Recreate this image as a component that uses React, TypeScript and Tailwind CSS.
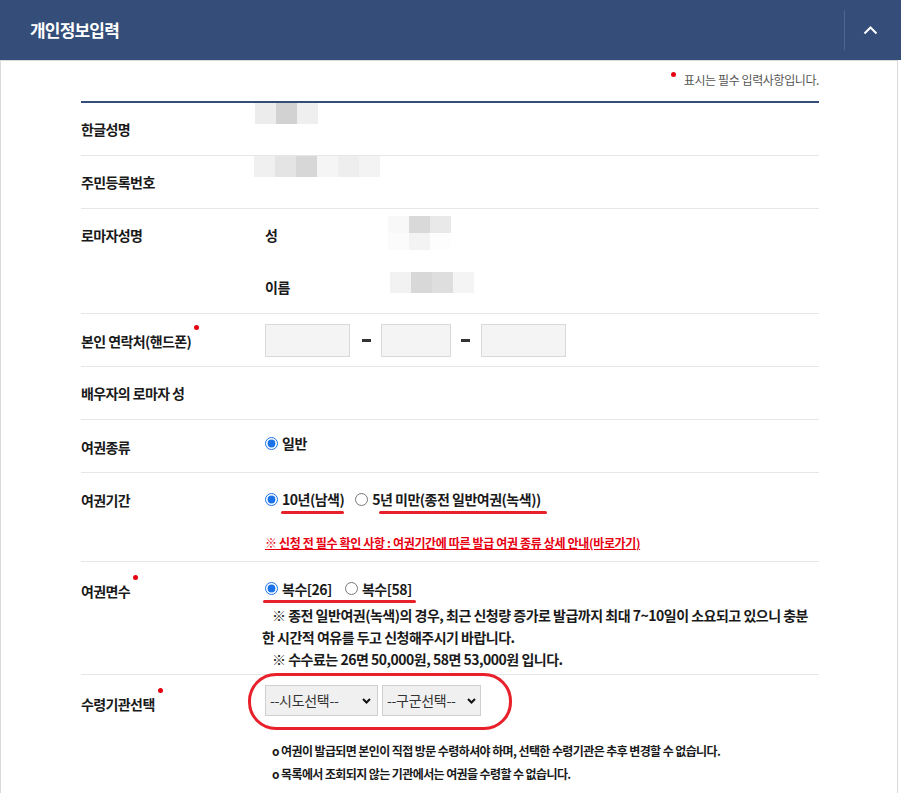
import React from "react";

const blocks = {
  name: ["#ececec", "#d2d2d2", "#efefef"],
  jumin: ["#f0f0f0", "#e4e4e4", "#d7d7d7", "#f5f5f5", "#eeeeee", "#f3f3f3"],
  lastTop: ["#f8f8f8", "#d9d9d9", "#e9e9e9"],
  lastBottom: ["#fbfbfb", "#f3f3f3", "#fdfdfd"],
  first: ["#f2f2f2", "#d8d8d8", "#dedede", "#f4f4f4"],
};

function Blur({ colors, h = "h-[21px]" }: { colors: string[]; h?: string }) {
  return (
    <div className="flex">
      {colors.map((c, i) => (
        <div key={i} className={`w-[21px] ${h}`} style={{ backgroundColor: c }} />
      ))}
    </div>
  );
}

function Label({ children, dot }: { children: React.ReactNode; dot?: boolean }) {
  return (
    <span className="relative text-[14px] leading-[20px] font-bold text-[#1a1a1a] tracking-[-0.6px]">
      {children}
      {dot && <span className="absolute -right-[8px] -top-[6px] w-[5px] h-[5px] rounded-full bg-[#e60012]" />}
    </span>
  );
}

function Radio({ name, checked, children }: { name: string; checked?: boolean; children: React.ReactNode }) {
  return (
    <label className="flex items-center gap-[4px]">
      <input type="radio" name={name} defaultChecked={checked} className="m-0 w-[13px] h-[13px] accent-[#1a73e8]" />
      <span className="text-[14px] leading-[18px] font-bold text-[#1a1a1a] tracking-[-0.5px]">{children}</span>
    </label>
  );
}

function Row({ label, dot, className = "", labelClass = "items-center", children }: {
  label: string;
  dot?: boolean;
  className?: string;
  labelClass?: string;
  children?: React.ReactNode;
}) {
  return (
    <div className={`flex border-b border-[#e6e6e6] ${className}`}>
      <div className={`w-[174px] flex shrink-0 ${labelClass}`}>
        <Label dot={dot}>{label}</Label>
      </div>
      <div className="flex-1">{children}</div>
    </div>
  );
}

export default function App() {
  return (
    <div className="w-[901px] bg-white font-['Noto_Sans_CJK_KR','Noto_Sans',sans-serif]">
      {/* header */}
      <div className="h-[60px] bg-[#344e79] flex items-center justify-between">
        <h2 className="pl-[30px] text-[17px] font-bold text-white tracking-[-0.8px]">개인정보입력</h2>
        <div className="flex items-center h-full">
          <div className="w-px h-[40px] bg-[#4d6790]" />
          <div className="w-[50px] mr-[6px] flex justify-center">
            <svg width="15" height="9" viewBox="0 0 15 9" fill="none">
              <path d="M1.5 7.5 L7.5 1.5 L13.5 7.5" stroke="white" strokeWidth="2" />
            </svg>
          </div>
        </div>
      </div>

      <div className="w-[898px] border-x border-t border-[#d9d9d9] pl-[80px]">
        <div className="w-[738px]">
          <div className="h-[40px] pt-[10px] flex justify-end">
            <span className="relative text-[12px] leading-[18px] text-[#555] tracking-[-0.4px]">
              <span className="absolute -left-[13px] top-[1px] w-[5px] h-[5px] rounded-full bg-[#e60012]" />
              표시는 필수 입력사항입니다.
            </span>
          </div>

          <div className="border-t-2 border-[#344e79]">
            <Row label="한글성명" className="h-[53px]">
              <div className="pb-[10px]">
                <Blur colors={blocks.name} />
              </div>
            </Row>
            <Row label="주민등록번호" className="h-[53px]">
              <div className="pb-[10px] -ml-px">
                <Blur colors={blocks.jumin} />
              </div>
            </Row>
            <Row label="로마자성명" className="h-[105px]" labelClass="items-start pt-[16px]">
              <div className="flex h-[52px] items-center">
                <span className="w-[133px] pl-[10px] text-[14px] font-bold text-[#1a1a1a]">성</span>
                <div className="flex flex-col -mt-[4px]">
                  <Blur colors={blocks.lastTop} h="h-[17px]" />
                  <Blur colors={blocks.lastBottom} h="h-[17px]" />
                </div>
              </div>
              <div className="flex h-[52px] items-center">
                <span className="w-[135px] pl-[10px] text-[14px] font-bold text-[#1a1a1a] tracking-[-0.5px]">이름</span>
                <div className="-mt-[10px]">
                  <Blur colors={blocks.first} />
                </div>
              </div>
            </Row>
            <Row label="본인 연락처(핸드폰)" dot className="h-[53px]" labelClass="items-center pt-[2px]">
              <div className="flex items-center h-full pl-[10px]">
                <input className="w-[85px] h-[33px] bg-[#f4f4f4] border border-[#d9d9d9]" />
                <div className="w-[9px] h-[3px] bg-[#333] ml-[12px] mr-[10px]" />
                <input className="w-[70px] h-[33px] bg-[#f4f4f4] border border-[#d9d9d9]" />
                <div className="w-[9px] h-[3px] bg-[#333] ml-[10px] mr-[11px]" />
                <input className="w-[85px] h-[33px] bg-[#f4f4f4] border border-[#d9d9d9]" />
              </div>
            </Row>
            <Row label="배우자의 로마자 성" className="h-[53px]" />
            <Row label="여권종류" className="h-[53px]" labelClass="items-center pt-[1px]">
              <div className="flex items-center h-full pl-[10px] pb-[6px]">
                <Radio name="kind" checked>일반</Radio>
              </div>
            </Row>
            <Row label="여권기간" className="h-[89px]" labelClass="items-start pt-[17px]">
              <div className="pl-[10px] pt-[17px]">
                <div className="flex items-center gap-[11px]">
                  <div className="relative">
                    <Radio name="period" checked>10년(남색)</Radio>
                    <span className="absolute left-[16px] right-0 -bottom-[6px] h-[3px] rounded-full bg-[#e8202a]" />
                  </div>
                  <div className="relative">
                    <Radio name="period">5년 미만(종전 일반여권(녹색))</Radio>
                    <span className="absolute left-[24px] -right-[6px] -bottom-[6px] h-[3px] rounded-full bg-[#e8202a]" />
                  </div>
                </div>
                <a className="block mt-[26px] text-[12px] leading-[18px] font-bold text-[#e60012] underline tracking-[-0.35px] whitespace-nowrap">
                  ※ 신청 전 필수 확인 사항 : 여권기간에 따른 발급 여권 종류 상세 안내(바로가기)
                </a>
              </div>
            </Row>
            <Row label="여권면수" dot className="h-[113px]" labelClass="items-start pt-[19px]">
              <div className="pl-[10px] pt-[14px]">
                <div className="relative inline-flex items-center gap-[13px]">
                  <Radio name="pages" checked>복수[26]</Radio>
                  <Radio name="pages">복수[58]</Radio>
                  <span className="absolute -left-[2px] -right-[4px] -bottom-[5px] h-[3px] rounded-full bg-[#e8202a]" />
                </div>
                <div className="mt-[4px] -ml-[3px] text-[14px] leading-[22px] font-bold text-[#1a1a1a] tracking-[-0.5px] whitespace-nowrap">
                  <div className="pl-[10px]">※ 종전 일반여권(녹색)의 경우, 최근 신청량 증가로 발급까지 최대 7~10일이 소요되고 있으니 충분</div>
                  <div>한 시간적 여유를 두고 신청해주시기 바랍니다.</div>
                  <div className="pl-[10px]">※ 수수료는 26면 50,000원, 58면 53,000원 입니다.</div>
                </div>
              </div>
            </Row>
            <div className="flex h-[118px]">
              <div className="w-[174px] shrink-0 pt-[16px]">
                <Label dot>수령기관선택</Label>
              </div>
              <div className="flex-1 pl-[10px] pt-[10px]">
                <div className="relative flex gap-[4px]">
                  <span className="absolute -left-[17px] -top-[12px] w-[264px] h-[57px] rounded-[28px] border-[3px] border-[#e8202a]" />
                  <div className="relative w-[113px] h-[31px] bg-[#f0f0f0] border border-[#cfcfcf] flex items-center pl-[4px] text-[14px] text-[#333] tracking-[-0.3px]">
                    --시도선택--
                    <svg className="absolute right-[6px] top-[12px]" width="9" height="6" viewBox="0 0 9 6" fill="none">
                      <path d="M1 1 L4.5 4.5 L8 1" stroke="#111" strokeWidth="2" />
                    </svg>
                  </div>
                  <div className="relative w-[99px] h-[31px] bg-[#f0f0f0] border border-[#cfcfcf] flex items-center pl-[4px] text-[14px] text-[#333] tracking-[-0.3px]">
                    --구군선택--
                    <svg className="absolute right-[4px] top-[12px]" width="9" height="6" viewBox="0 0 9 6" fill="none">
                      <path d="M1 1 L4.5 4.5 L8 1" stroke="#111" strokeWidth="2" />
                    </svg>
                  </div>
                </div>
                <div className="mt-[23px] pl-[7px] text-[12px] leading-[23px] font-bold text-[#1a1a1a] tracking-[-0.6px] whitespace-nowrap">
                  <div>o 여권이 발급되면 본인이 직접 방문 수령하셔야 하며, 선택한 수령기관은 추후 변경할 수 없습니다.</div>
                  <div>o 목록에서 조회되지 않는 기관에서는 여권을 수령할 수 없습니다.</div>
                </div>
              </div>
            </div>
          </div>
        </div>
      </div>
    </div>
  );
}
